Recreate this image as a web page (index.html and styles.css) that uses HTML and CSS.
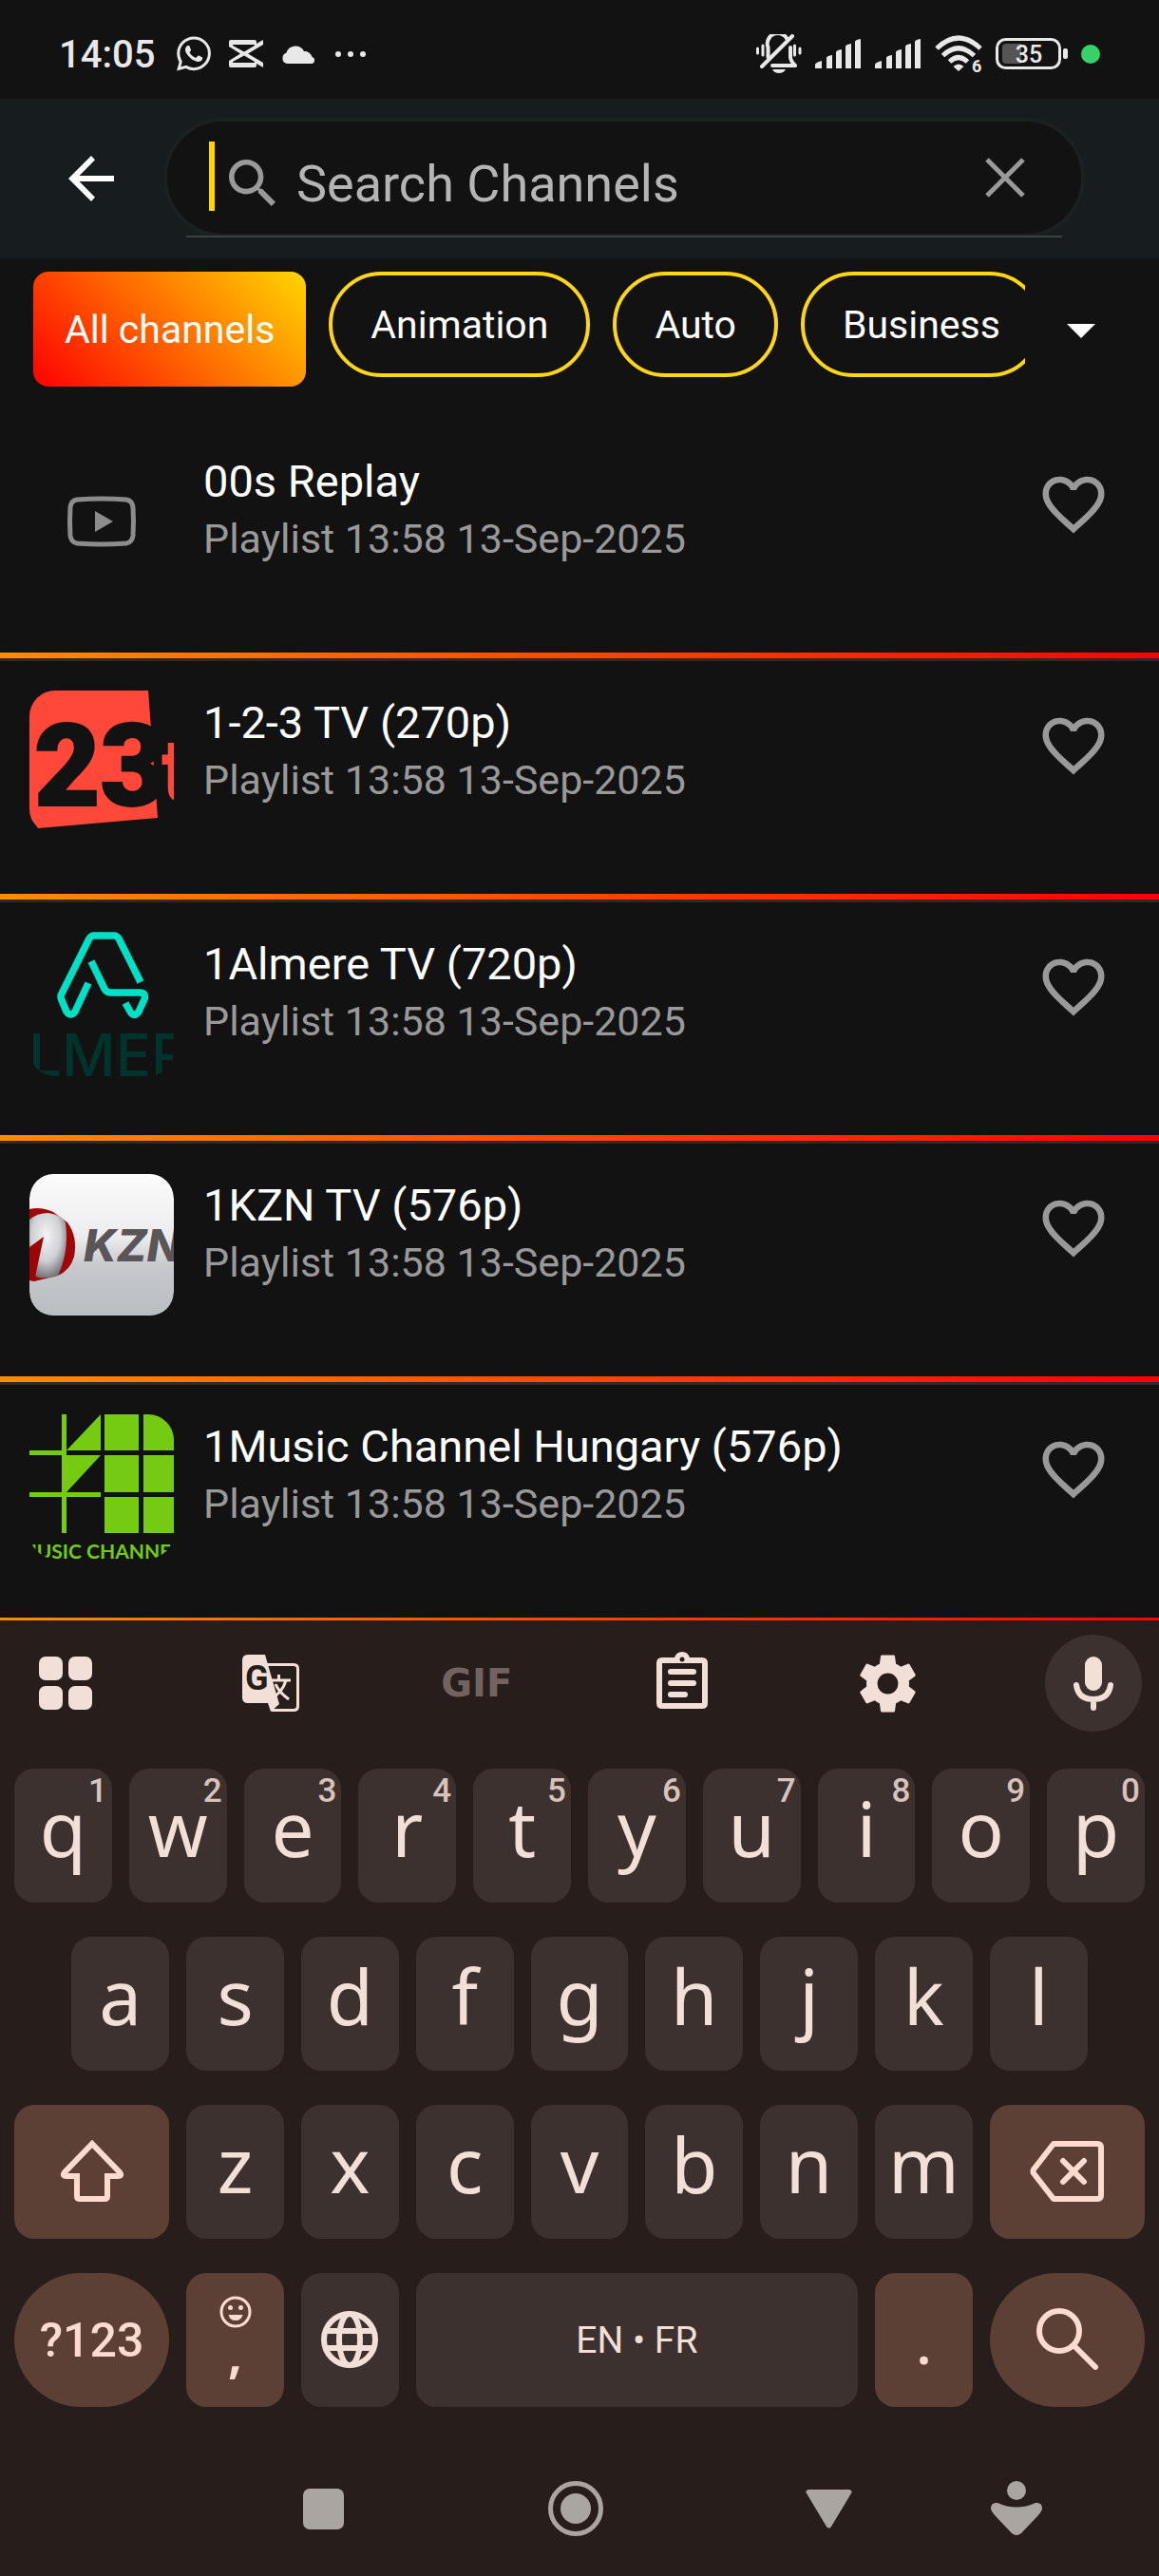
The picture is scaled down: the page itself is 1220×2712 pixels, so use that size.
FILE: index.html
```html
<!DOCTYPE html>
<html lang="en">
<head>
<meta charset="utf-8">
<meta name="viewport" content="width=device-width,initial-scale=1.0">

<title>Search Channels</title>

<link rel="stylesheet" href="styles.css">

</head>

<body>

<!-- shared icons -->
<svg class="sprite" aria-hidden="true">
    <symbol id="i-heart" viewBox="0 0 24 24">
        <path d="M16.5 3c-1.74 0-3.41.81-4.5 2.09C10.91 3.81 9.24 3 7.5 3 4.42 3 2 5.42 2 8.5c0 3.78 3.4 6.86 8.55 11.54L12 21.35l1.45-1.32C18.6 15.36 22 12.28 22 8.5 22 5.42 19.58 3 16.5 3zm-4.4 15.55l-.1.1-.1-.1C7.14 14.24 4 11.39 4 8.5 4 6.5 5.5 5 7.5 5c1.54 0 3.04.99 3.57 2.36h1.87C13.46 5.99 14.96 5 16.5 5c2 0 3.5 1.5 3.5 3.5 0 2.89-3.14 5.74-7.9 10.05z"/>
    </symbol>
    <symbol id="i-signal" viewBox="0 0 49 31">
        <path d="M0 31v-4q0-2 7-4v8zM12 31V20q0-2 6-3v14zM22 31V14q0-2 6-3v20zM32 31V8q0-2 6-3v26zM42 31V3q0-2 6-3v31z"/>
    </symbol>
</svg>

<div class="status-bar">
    <div class="status-left">
        <span class="clock">14:05</span>
        <svg width="36" height="37" viewBox="0 0 24 24"><path d="M17.472 14.382c-.297-.149-1.758-.867-2.03-.967-.273-.099-.471-.148-.67.15-.197.297-.767.966-.94 1.164-.173.199-.347.223-.644.075-.297-.15-1.255-.463-2.39-1.475-.883-.788-1.48-1.761-1.653-2.059-.173-.297-.018-.458.13-.606.134-.133.298-.347.446-.52.149-.174.198-.298.298-.497.099-.198.05-.371-.025-.52-.075-.149-.669-1.612-.916-2.207-.242-.579-.487-.5-.669-.51-.173-.008-.371-.01-.57-.01-.198 0-.52.074-.792.372-.272.297-1.04 1.016-1.04 2.479 0 1.462 1.065 2.875 1.213 3.074.149.198 2.096 3.2 5.077 4.487.709.306 1.262.489 1.694.625.712.227 1.36.195 1.871.118.571-.085 1.758-.719 2.006-1.413.248-.694.248-1.289.173-1.413-.074-.124-.272-.198-.57-.347m-5.421 7.403h-.004a9.87 9.87 0 01-5.031-1.378l-.361-.214-3.741.982.998-3.648-.235-.374a9.86 9.86 0 01-1.51-5.26c.001-5.45 4.436-9.884 9.888-9.884 2.64 0 5.122 1.03 6.988 2.898a9.825 9.825 0 012.893 6.994c-.003 5.45-4.437 9.884-9.885 9.884m8.413-18.297A11.815 11.815 0 0012.05 0C5.495 0 .16 5.335.157 11.892c0 2.096.547 4.142 1.588 5.945L.057 24l6.305-1.654a11.882 11.882 0 005.683 1.448h.005c6.554 0 11.89-5.335 11.893-11.893a11.821 11.821 0 00-3.48-8.413z"/></svg>
        <svg width="36" height="29" viewBox="0 0 36 29"><path fill-rule="evenodd" d="M2 0H27Q29 0 29 2V4L36 0V5L20 14.500L36 24V29L29 25V27Q29 29 27 29H2Q0 29 0 27V22L12 14.500L0 7V2Q0 0 2 0zM4 5V6L16 12.500L27 6V5zM16 16.500L4 23V24H27V23z"/></svg>
        <svg width="36" height="20" viewBox="0 0 36 20"><path d="M6 20a6 6 0 0 1-.5-11.500A10 10 0 0 1 24 7a8 8 0 0 1 8.500 6A3.600 3.600 0 0 1 32 20z"/></svg>
        <svg width="36" height="6" viewBox="0 0 36 6"><circle cx="5" cy="3" r="3"/><circle cx="18" cy="3" r="3"/><circle cx="31" cy="3" r="3"/></svg>
    </div>
    <div class="status-right">
        <svg width="48" height="41" viewBox="0 0 48 41"><path fill="none" stroke="#e8e8e8" stroke-width="4" stroke-linejoin="round" stroke-linecap="round" d="M12.500 24V14A11 11 0 0 1 33 6M6 34L38 2M36 14V24Q36 28 41 33H17"/><path fill="none" stroke="#e8e8e8" stroke-width="3" stroke-linecap="round" d="M1.500 15v5M7 12v10M40.500 12v10M46 15v5"/><path d="M17 37H31Q29 41 24 41T17 37z"/></svg>
        <svg width="49" height="31"><use href="#i-signal"/></svg>
        <svg width="49" height="31"><use href="#i-signal"/></svg>
        <svg width="50" height="40" viewBox="0 0 50 40"><g fill="none" stroke="#e8e8e8" stroke-width="5"><path d="M2 14Q25-8 48 14"/><path d="M8.500 21.500Q25 6 41.500 21.500"/><path d="M15.500 28Q25 19 34.500 28"/></g><path d="M19.500 33Q25 28 30.500 33L25 38z"/><text class="wifi-gen" x="39" y="39">6</text></svg>
        <svg width="76" height="33" viewBox="0 0 76 33"><rect x="1.500" y="1.500" width="66" height="30" rx="9" fill="none" stroke="#e8e8e8" stroke-width="3"/><path d="M11 6H27V27H11Q7 27 7 23V10Q7 6 11 6z" fill="#555"/><rect x="71" y="11" width="5" height="11" rx="2"/><text class="battery" x="35" y="26" text-anchor="middle">35</text></svg>
        <span class="privacy-dot"></span>
    </div>
</div>

<header class="app-bar">
    <button class="icon-btn back" aria-label="Back">
        <svg width="48" height="48" viewBox="0 0 48 48"><path d="M48 21H11.500L28 4.200L24 0L0 24L24 48L28 43.800L11.500 27H48z" fill="#fff"/></svg>
    </button>
    <div class="search-box">
        <span class="caret"></span>
        <label for="search" aria-label="Search Channels">
            <svg width="49" height="49" viewBox="3 3 17.500 17.500"><path fill="#9a9a9a" d="M15.500 14h-.79l-.28-.27C15.410 12.590 16 11.110 16 9.500 16 5.910 13.090 3 9.500 3S3 5.910 3 9.500 5.910 16 9.500 16c1.610 0 3.090-.59 4.230-1.570l.27.28v.79l5 4.990L20.490 19l-4.990-5zm-6 0C7.010 14 5 11.990 5 9.500S7.010 5 9.500 5 14 7.010 14 9.500 11.990 14 9.500 14z"/></svg>
        </label>
        <input id="search" type="text" placeholder="Search Channels">
        <button class="icon-btn" aria-label="Clear">
            <svg width="42" height="42" viewBox="0 0 42 42"><path d="M2 2L40 40M40 2L2 40" stroke="#9a9a9a" stroke-width="5"/></svg>
        </button>
    </div>
</header>

<nav class="filters">
    <div class="chips">
        <button class="chip active">All channels</button>
        <button class="chip">Animation</button>
        <button class="chip">Auto</button>
        <button class="chip">Business</button>
    </div>
    <button class="icon-btn more" aria-label="More categories">
        <svg width="30" height="15" viewBox="0 0 30 15"><path d="M0 0H30L15 15z" fill="#fff"/></svg>
    </button>
</nav>

<main class="channels">
    <article class="channel">
        <svg class="thumb" viewBox="0 0 152 152"><path d="M50 53Q76 51 102 53Q108 54 109 61Q110 76 109 91Q108 98 102 99Q76 101 50 99Q44 98 43 91Q42 76 43 61Q44 54 50 53z" fill="none" stroke="#8c8c8c" stroke-width="5"/><path d="M69 65L88 76L69 87z" fill="#8c8c8c"/></svg>
        <div class="info"><h2>00s Replay</h2><p>Playlist 13:58 13-Sep-2025</p></div>
        <button class="icon-btn fav" aria-label="Add to favourites"><svg width="78" height="78"><use href="#i-heart"/></svg></button>
    </article>
    <article class="channel">
        <svg class="thumb" viewBox="0 0 152 152"><path d="M0 0H125L135 134L9 145L0 133z" fill="#ff473a"/><text class="logo-123" x="5" y="121">23</text><text class="logo-123-t" x="139" y="116">t</text></svg>
        <div class="info"><h2>1-2-3 TV (270p)</h2><p>Playlist 13:58 13-Sep-2025</p></div>
        <button class="icon-btn fav" aria-label="Add to favourites"><svg width="78" height="78"><use href="#i-heart"/></svg></button>
    </article>
    <article class="channel">
        <svg class="thumb" viewBox="0 0 152 152"><g fill="none" stroke="#00e0c7" stroke-width="7.500" stroke-linejoin="round"><path d="M117 53L94 7Q92 4 89 4H68Q65 4 63 7L34 65Q32 68 34 72L39 84Q43 90 48 84L62 54"/><path d="M65 31L79 60Q81 64 86 64H116Q123 64 121 71L115 84Q110 91 106 84L101 75"/></g><text class="logo-almere" x="-1" y="152">LMER</text></svg>
        <div class="info"><h2>1Almere TV (720p)</h2><p>Playlist 13:58 13-Sep-2025</p></div>
        <button class="icon-btn fav" aria-label="Add to favourites"><svg width="78" height="78"><use href="#i-heart"/></svg></button>
    </article>
    <article class="channel">
        <svg class="thumb" viewBox="0 0 152 152">
            <defs>
                <linearGradient id="kzn-bg" x2="0" y2="1"><stop offset="0" stop-color="#fcfcfc"/><stop offset=".45" stop-color="#ececee"/><stop offset=".65" stop-color="#c6c8cc"/><stop offset="1" stop-color="#b9bec1"/></linearGradient>
                <radialGradient id="kzn-ball" cx=".45" cy=".35" r=".65"><stop offset="0" stop-color="#f4f4f6"/><stop offset=".6" stop-color="#d0d0d4"/><stop offset="1" stop-color="#77777c"/></radialGradient>
            </defs>
            <rect y="1" width="152" height="149" rx="25" fill="url(#kzn-bg)"/>
            <path d="M0 38Q12 35 25 41L40 52Q51 67 47 88Q43 102 30 108L5 114L0 112z" fill="#a00708"/>
            <path d="M0 49Q8 42 20 42Q34 44 38 52Q42 82 30 108Q22 111 10 110L0 105z" fill="url(#kzn-ball)"/>
            <path d="M0 78L15 67L5 114L0 113z" fill="#9b0506"/>
            <text class="logo-kzn" x="57" y="93">KZN</text>
        </svg>
        <div class="info"><h2>1KZN TV (576p)</h2><p>Playlist 13:58 13-Sep-2025</p></div>
        <button class="icon-btn fav" aria-label="Add to favourites"><svg width="78" height="78"><use href="#i-heart"/></svg></button>
    </article>
    <article class="channel">
        <svg class="thumb" viewBox="0 0 152 152"><path fill="#74cb12" d="M34 0h5v125h-5zM0 38h34v5H0zM0 82h75v5H0zM39 38L75 0V38zM34 43H75L39 82H34zM79 0h36v38H79zM120 0h32v38h-32zM79 43h36v39H79zM120 43h32v39h-32zM79 87h36v38H79zM120 87h32v38h-32z"/><text class="logo-music" x="74" y="152" text-anchor="middle">MUSIC CHANNEL</text></svg>
        <div class="info"><h2>1Music Channel Hungary (576p)</h2><p>Playlist 13:58 13-Sep-2025</p></div>
        <button class="icon-btn fav" aria-label="Add to favourites"><svg width="78" height="78"><use href="#i-heart"/></svg></button>
    </article>
</main>

<section class="keyboard">
    <div class="toolbar">
        <button aria-label="Menu"><svg width="56" height="56" viewBox="0 0 56 56"><rect width="25" height="25" rx="7"/><rect x="31" width="25" height="25" rx="7"/><rect y="31" width="25" height="25" rx="7"/><rect x="31" y="31" width="25" height="25" rx="7"/></svg></button>
        <button aria-label="Translate"><svg width="60" height="60" viewBox="0 0 60 60"><path d="M26 10.500H54Q58.500 10.500 58.500 15V54Q58.500 58.500 54 58.500H31" fill="none" stroke="#f1dfd8" stroke-width="3"/><path d="M6 0H24L39 52L30 60L27 51H6Q0 51 0 45V6Q0 0 6 0z"/><text class="tr-g" x="3" y="37">G</text><path d="M31 27H51M38.500 21V27M46 27Q43 38 33 45M35 31Q39 40 49 47" fill="none" stroke="#f1dfd8" stroke-width="3"/></svg></button>
        <button class="gif">GIF</button>
        <button aria-label="Clipboard"><svg class="clip" width="54" height="60" viewBox="0 0 54 60"><path fill-rule="evenodd" d="M6 6H19Q21 0 27 0T35 6H48Q54 6 54 12V54Q54 60 48 60H6Q0 60 0 54V12Q0 6 6 6zM6 12V54H48V12z"/><circle cx="27" cy="8" r="2.500" fill="#271d1b"/><path d="M15 21H39M15 33H39M15 45H30" stroke="#f1dfd8" stroke-width="6" stroke-linecap="round"/></svg></button>
        <button aria-label="Settings"><svg width="75" height="75" viewBox="0 0 24 24"><path fill-rule="evenodd" d="M19.140 12.940c.04-.3.06-.61.06-.94 0-.32-.02-.64-.07-.94l2.030-1.580c.18-.14.23-.41.12-.61l-1.920-3.320c-.12-.22-.37-.29-.59-.22l-2.390.96c-.5-.38-1.030-.7-1.620-.94l-.36-2.540c-.04-.24-.24-.41-.48-.41h-3.840c-.24 0-.43.17-.47.41l-.36 2.540c-.59.24-1.130.57-1.620.94l-2.390-.96c-.22-.08-.47 0-.59.22L2.740 8.870c-.12.21-.08.47.12.61l2.030 1.580c-.05.3-.09.63-.09.94s.02.64.07.94l-2.030 1.580c-.18.14-.23.41-.12.61l1.920 3.320c.12.22.37.29.59.22l2.390-.96c.5.38 1.030.7 1.620.94l.36 2.540c.05.24.24.41.48.41h3.840c.24 0 .44-.17.47-.41l.36-2.540c.59-.24 1.130-.56 1.620-.94l2.390.96c.22.08.47 0 .59-.22l1.920-3.320c.12-.22.07-.47-.12-.61l-2.010-1.580zM12 15.500a3.500 3.500 0 1 1 0-7 3.500 3.500 0 0 1 0 7z"/></svg></button>
        <button class="mic" aria-label="Voice input"><svg width="42" height="57" viewBox="0 0 42 57"><rect x="12" width="18" height="36" rx="9"/><path d="M3 30Q5 45 21 45T39 30M21 45V54" fill="none" stroke="#f1dfd8" stroke-width="6" stroke-linecap="round"/></svg></button>
    </div>

    <div class="keys">
        <button class="key">q<sup>1</sup></button>
        <button class="key">w<sup>2</sup></button>
        <button class="key">e<sup>3</sup></button>
        <button class="key">r<sup>4</sup></button>
        <button class="key">t<sup>5</sup></button>
        <button class="key">y<sup>6</sup></button>
        <button class="key">u<sup>7</sup></button>
        <button class="key">i<sup>8</sup></button>
        <button class="key">o<sup>9</sup></button>
        <button class="key">p<sup>0</sup></button>

        <button class="key indent">a</button>
        <button class="key">s</button>
        <button class="key">d</button>
        <button class="key">f</button>
        <button class="key">g</button>
        <button class="key">h</button>
        <button class="key">j</button>
        <button class="key">k</button>
        <button class="key">l</button>

        <button class="key wide accent row-start" aria-label="Shift"><svg width="68" height="65" viewBox="0 0 68 65"><path d="M34 4L63 34Q66 38 61 38H50V59Q50 62 47 62H21Q18 62 18 59V38H7Q2 38 5 34z" fill="none" stroke="#ffdbcf" stroke-width="6"/></svg></button>
        <button class="key">z</button>
        <button class="key">x</button>
        <button class="key">c</button>
        <button class="key">v</button>
        <button class="key">b</button>
        <button class="key">n</button>
        <button class="key">m</button>
        <button class="key wide accent" aria-label="Backspace"><svg width="78" height="64" viewBox="0 0 78 64"><path d="M25 3H71Q75 3 75 7V57Q75 61 71 61H25L4 34Q3 32 4 30z" fill="none" stroke="#ffdbcf" stroke-width="6" stroke-linejoin="round"/><path d="M35 21L57 43M57 21L35 43" stroke="#ffdbcf" stroke-width="6" stroke-linecap="round"/></svg></button>

        <button class="key wide accent round symbols">?123</button>
        <button class="key accent comma"><svg width="34" height="34" viewBox="0 0 34 34"><circle cx="17" cy="17" r="15" fill="none" stroke="#ffdbcf" stroke-width="3"/><circle cx="11.500" cy="12.500" r="2.500"/><circle cx="22.500" cy="12.500" r="2.500"/><path d="M9.500 20H24.500Q23 26 17 26T9.500 20z"/></svg>,</button>
        <button class="key" aria-label="Language"><svg width="60" height="60" viewBox="0 0 60 60"><g fill="none" stroke="#f1dfd8" stroke-width="6"><circle cx="30" cy="30" r="27"/><ellipse cx="30" cy="30" rx="11" ry="27"/><path d="M4 21H56M4 39H56"/></g></svg></button>
        <button class="key space">EN • FR</button>
        <button class="key accent period">.</button>
        <button class="key wide accent round" aria-label="Search"><svg width="65" height="65" viewBox="0 0 65 65"><circle cx="24" cy="24" r="21" fill="none" stroke="#ffdbcf" stroke-width="6"/><path d="M39 39L62 62" stroke="#ffdbcf" stroke-width="6" stroke-linecap="round"/></svg></button>
    </div>

    <nav class="nav-bar">
        <button aria-label="Recents"><svg width="43" height="43"><rect width="43" height="43" rx="7"/></svg></button>
        <button aria-label="Home"><svg width="58" height="58" viewBox="0 0 58 58"><circle cx="29" cy="29" r="26.500" fill="none" stroke="#aaa5a1" stroke-width="5"/><circle cx="29" cy="29" r="16"/></svg></button>
        <button aria-label="Back"><svg width="49" height="41" viewBox="0 0 49 41"><path d="M3 0H46Q50 1 48 4L27 39Q24.500 42 22 39L1 4Q-1 1 3 0z"/></svg></button>
        <button aria-label="Accessibility"><svg width="54" height="58" viewBox="0 0 54 58"><circle cx="27" cy="10" r="10"/><path d="M7 23Q27 32 47 23Q54 22 54 29Q54 31 50 36L32 55Q27 59 22 55L4 36Q0 31 0 29Q0 22 7 23z"/></svg></button>
    </nav>
</section>

</body>

</html>
```
FILE: styles.css
```css
* {
	box-sizing: border-box;
}

body {
	margin: 0;
	height: 100vh;
	display: flex;
	flex-direction: column;
	overflow: hidden;
	font-family: Roboto, "Liberation Sans", sans-serif;
	background: #121212;
	color: #fff;
}

button {
	margin: 0;
	padding: 0;
	border: 0;
	background: none;
	color: inherit;
	font: inherit;
	cursor: pointer;
}

svg {
	display: block;
	flex: none;
}

.sprite {
	position: absolute;
	width: 0;
	height: 0;
}

.icon-btn {
	flex: none;
}

/* status bar */
.status-bar {
	flex: none;
	height: 104px;
	padding: 9px 62px 0 62px;
	display: flex;
	align-items: center;
	justify-content: space-between;
	color: #e8e8e8;
	fill: #e8e8e8;
}

.status-left, .status-right {
	display: flex;
	align-items: center;
}

.status-left {
	gap: 19px;
}

.status-right {
	gap: 14px;
}

.clock {
	padding: 2px 4px 0 0;
	font-size: 40px;
	font-weight: 500;
	line-height: 48px;
}

.wifi-gen {
	font-size: 18px;
	font-weight: 700;
}

.battery {
	font-size: 25px;
	font-weight: 500;
}

.privacy-dot {
	width: 20px;
	height: 20px;
	border-radius: 50%;
	background: #36d167;
}

/* search */
.app-bar {
	flex: none;
	height: 168px;
	padding: 0 78px 0 72px;
	display: flex;
	align-items: center;
	gap: 52px;
	background: #171c1e;
}

.search-box {
	position: relative;
	flex: 1;
	min-width: 0;
	height: 126px;
	margin-bottom: 2px;
	padding: 0 59px 0 44px;
	display: flex;
	align-items: center;
	border: 4px solid #1b2021;
	border-radius: 63px;
	background: #121212;
}

.search-box:after {
	content: "";
	position: absolute;
	left: 20px;
	right: 20px;
	bottom: -4px;
	height: 2px;
	background: #3d4142;
}

.caret {
	width: 6px;
	height: 73px;
	margin: 0 15px 3px 0;
	background: #ffd600;
}

.search-box label {
	padding-top: 10px;
}

.search-box input {
	flex: 1;
	min-width: 0;
	height: 80px;
	margin-left: 22px;
	padding: 12px 0 0;
	border: 0;
	outline: 0;
	background: none;
	color: #fff;
	font: 54px Roboto, "Liberation Sans", sans-serif;
}

.search-box input::placeholder {
	color: #b5b5b5;
	opacity: 1;
}

/* category chips */
.filters {
	flex: none;
	height: 170px;
	padding: 14px 67px 0 35px;
	display: flex;
	align-items: flex-start;
	gap: 44px;
}

.chips {
	flex: 1;
	min-width: 0;
	display: flex;
	align-items: flex-start;
	gap: 24px;
	overflow: hidden;
}

.chip {
	flex: none;
	height: 111px;
	padding: 2px 40px 0;
	border: 4px solid #ffd614;
	border-radius: 56px;
	font-size: 41px;
	line-height: 101px;
}

.chip.active {
	height: 121px;
	padding: 2px 33px 0;
	border: 0;
	border-radius: 16px;
	background: linear-gradient(45deg, #f00, #ffd600);
}

.more {
	margin-top: 55px;
}

/* channel list */
.channels {
	flex: 1;
	min-height: 0;
	overflow: hidden;
}

.channel {
	position: relative;
	height: 254px;
	padding: 31px 51px 0 31px;
	display: flex;
	align-items: flex-start;
	border-bottom: 3px solid #322925;
}

.channel:after {
	content: "";
	position: absolute;
	left: 0;
	right: 0;
	bottom: 0;
	height: 6px;
	background: linear-gradient(90deg, #ff8c00, #f00);
}

.thumb {
	width: 152px;
	height: 152px;
	border-radius: 27px;
	overflow: hidden;
}

.info {
	flex: 1;
	min-width: 0;
	padding: 4px 0 0 31px;
}

.info h2, .info p {
	margin: 0;
	font-size: 47px;
	font-weight: 400;
	line-height: 60px;
	white-space: nowrap;
}

.info p {
	font-size: 43px;
	color: #999;
}

.fav {
	margin-top: 19px;
	fill: #999;
}

.logo-123, .logo-123-t {
	font-size: 120px;
	font-weight: 900;
	fill: #121212;
}

.logo-123 {
	stroke: #121212;
	stroke-width: 2px;
}

.logo-123-t {
	font-size: 92px;
	fill: #ff473a;
}

.logo-almere {
	font-family: Inter, sans-serif;
	font-size: 62px;
	font-weight: 500;
	fill: #00332c;
}

.logo-kzn {
	font-family: Inter, sans-serif;
	font-size: 47px;
	font-weight: 800;
	font-style: italic;
	fill: #5a5557;
}

.logo-music {
	font-family: Lato, sans-serif;
	font-size: 21px;
	font-weight: 700;
	fill: #74cb12;
}

/* keyboard */
.keyboard {
	flex: none;
	background: #271d1b;
	color: #f1dfd8;
	fill: #f1dfd8;
}

.toolbar {
	padding: 15px 18px 39px;
	display: flex;
	justify-content: space-between;
}

.toolbar button {
	width: 102px;
	height: 102px;
	display: flex;
	align-items: center;
	justify-content: center;
}

.toolbar .clip {
	margin-bottom: 6px;
}

.toolbar .gif {
	font-family: "DejaVu Sans", sans-serif;
	font-size: 40px;
	font-weight: 700;
	color: #726360;
}

.toolbar .mic {
	border-radius: 50%;
	background: #3d3130;
}

.tr-g {
	font-size: 36px;
	font-weight: 700;
	fill: #271d1b;
}

.keys {
	padding: 0 6px;
	display: grid;
	grid-template-columns: repeat(20, 1fr);
	row-gap: 36px;
}

.key {
	position: relative;
	grid-column: span 2;
	height: 141px;
	margin: 0 9px;
	padding: 0 0 18px;
	border-radius: 21px;
	background: #3d3130;
	font-family: "Noto Sans", sans-serif;
	font-size: 80px;
	line-height: 120px;
}

.key svg {
	margin: 16px auto 0;
}

.key sup {
	position: absolute;
	top: 6px;
	right: 5px;
	font-family: Roboto, sans-serif;
	font-size: 35px;
	font-weight: 500;
	line-height: 36px;
	color: #d8c2bb;
}

.key.indent {
	grid-column: 2 / span 2;
}

.key.wide {
	grid-column: span 3;
}

.key.row-start {
	grid-column: 1 / span 3;
}

.key.accent {
	background: #5c4035;
	color: #ffdbcf;
	fill: #ffdbcf;
}

.key.round {
	border-radius: 71px;
}

.key.symbols, .key.space {
	padding: 0;
	font-family: Roboto, sans-serif;
	font-size: 50px;
	font-weight: 500;
}

.key.space {
	grid-column: span 8;
	font-size: 39px;
	font-weight: 400;
}

.key.comma, .key.period {
	padding: 0 0 10px;
	font-size: 56px;
	font-weight: 600;
	line-height: 50px;
}

.key.comma svg {
	margin-top: 0;
}

.key.period {
	padding: 6px 0 0;
}

/* system navigation */
.nav-bar {
	height: 178px;
	padding-top: 36px;
	display: grid;
	grid-template-columns: 207fr 266fr 266fr 266fr 130fr 85fr;
	align-items: center;
	fill: #aaa5a1;
}

.nav-bar button:first-child {
	grid-column: 2;
}

.nav-bar svg {
	margin: 0 auto;
}
```
